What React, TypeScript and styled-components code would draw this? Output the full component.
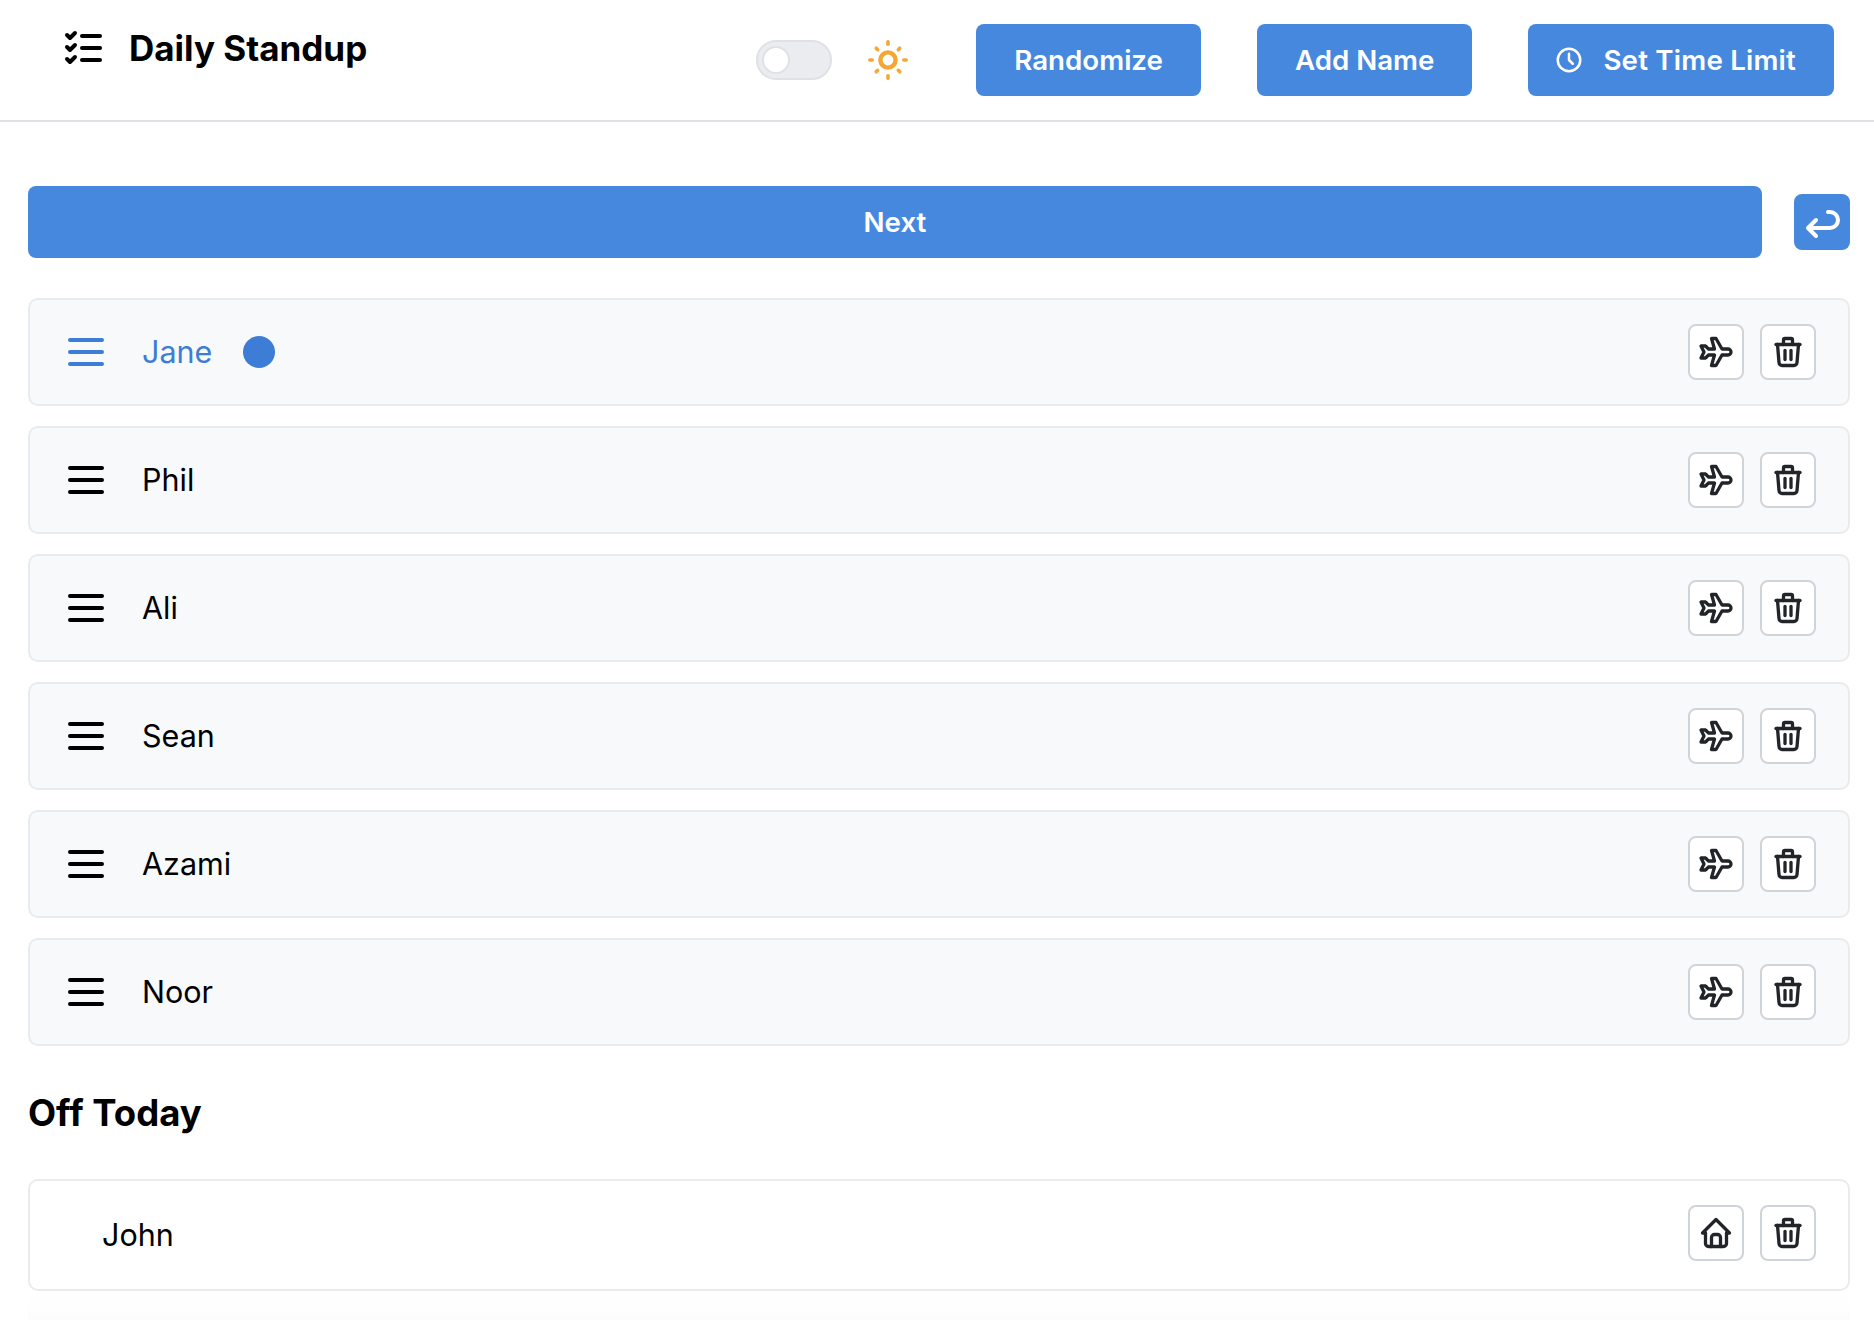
import styled, {createGlobalStyle} from 'styled-components';
import {
  TbArrowBack,
  TbClock,
  TbHome,
  TbListCheck,
  TbMenu2,
  TbPlane,
  TbTrash,
} from 'react-icons/tb';

const COLORS = {
  primary: '#4788df',
  active: '#3e7dd6',
  border: '#e9ecef',
  control: '#ced4da',
  rowBg: '#f8f9fa',
  icon: '#212529',
};

const NAMES = ['Jane', 'Phil', 'Ali', 'Sean', 'Azami', 'Noor'];

const GlobalStyle = createGlobalStyle`
  html, body {
    margin: 0;
    background: #fff;
    font-family: Inter, "Liberation Sans", sans-serif;
    color: #000;
  }
  * {
    box-sizing: border-box;
  }
`;

const Page = styled.div`
  height: 1320px;
  overflow: hidden;
  display: flex;
  flex-direction: column;
`;

const Header = styled.header`
  display: flex;
  justify-content: space-between;
  align-items: flex-start;
  height: 122px;
  padding: 24px 40px 0 60px;
  border-bottom: 2px solid #dee2e6;
`;

const Brand = styled.div`
  display: flex;
  align-items: center;
  gap: 21px;
  height: 48px;
`;

const Title = styled.h1`
  margin: 0;
  font-size: 35px;
  line-height: 48px;
  font-weight: 700;
`;

const Controls = styled.div`
  display: flex;
  align-items: center;
  gap: 56px;
`;

const ThemeSwitch = styled.div`
  display: flex;
  align-items: center;
  gap: 32px;
  padding-right: 8px;
  color: #f5a733;
`;

const SwitchTrack = styled.div`
  width: 76px;
  height: 40px;
  padding: 4px;
  border-radius: 20px;
  background: #eaecf0;
  border: 2px solid #dee2e6;
  display: flex;
  align-items: center;
`;

const SwitchThumb = styled.span`
  width: 28px;
  height: 28px;
  border-radius: 50%;
  background: #fff;
  border: 2px solid #dee2e6;
`;

const Button = styled.button<{$withIcon?: boolean}>`
  display: flex;
  align-items: center;
  justify-content: center;
  gap: 19px;
  height: 72px;
  padding: 0 38px 0 ${(p) => (p.$withIcon ? '26px' : '38px')};
  border: 0;
  border-radius: 8px;
  background: ${COLORS.primary};
  color: #fff;
  font-family: inherit;
  font-size: 27.7px;
  font-weight: 600;
  letter-spacing: ${(p) => (p.$withIcon ? '0.2px' : '0')};
`;

const Main = styled.main`
  flex: 1;
  padding: 64px 24px 0 28px;
  display: flex;
  flex-direction: column;
`;

const NextRow = styled.div`
  display: flex;
  align-items: center;
  gap: 32px;
  margin-bottom: 40px;
`;

const NextButton = styled(Button)`
  flex: 1;
`;

const ReturnButton = styled.button`
  width: 56px;
  height: 56px;
  padding: 0;
  border: 0;
  border-radius: 8px;
  background: ${COLORS.primary};
  color: #fff;
  display: flex;
  align-items: center;
  justify-content: center;
`;

const List = styled.div`
  display: flex;
  flex-direction: column;
  gap: 20px;
`;

const Row = styled.div<{$off?: boolean}>`
  display: flex;
  align-items: center;
  gap: 32px;
  height: ${(p) => (p.$off ? '112px' : '108px')};
  padding: 0 32px;
  border: 2px solid ${COLORS.border};
  border-radius: 10px;
  background: ${(p) => (p.$off ? '#fff' : COLORS.rowBg)};
`;

const Handle = styled.span<{$active?: boolean}>`
  display: flex;
  color: ${(p) => (p.$active ? COLORS.active : '#000')};
`;

const Name = styled.span<{$active?: boolean; $off?: boolean}>`
  font-size: 30.5px;
  color: ${(p) => (p.$active ? COLORS.active : '#000')};
  margin: 0 0 2px ${(p) => (p.$off ? '40px' : '0')};
`;

const Dot = styled.span`
  width: 32px;
  height: 32px;
  margin-left: -1px;
  border-radius: 50%;
  background: ${COLORS.active};
`;

const Actions = styled.div<{$off?: boolean}>`
  display: flex;
  gap: 16px;
  margin-left: auto;
  margin-bottom: ${(p) => (p.$off ? '4px' : '0')};
`;

const ActionButton = styled.button`
  width: 56px;
  height: 56px;
  padding: 0;
  border: 2px solid ${COLORS.control};
  border-radius: 8px;
  background: #fff;
  color: ${COLORS.icon};
  display: flex;
  align-items: center;
  justify-content: center;
`;

const SectionTitle = styled.h2`
  margin: 42px 0 41px;
  font-size: 36.5px;
  line-height: 50px;
  font-weight: 700;
`;

const BottomFade = styled.div`
  height: 26px;
  margin-top: auto;
  background: linear-gradient(#fff, #fcfcfc);
`;

// tabler sun-low has round dots, the reference rays are a bit longer
const SunIcon = () => (
  <svg
    width="48"
    height="48"
    viewBox="0 0 24 24"
    fill="none"
    stroke="currentColor"
    strokeWidth="2"
    strokeLinecap="round"
  >
    <circle cx="12" cy="12" r="3.8" strokeWidth="2.2" />
    {[0, 45, 90, 135, 180, 225, 270, 315].map((deg) => (
      <line
        key={deg}
        x1="12"
        y1={deg % 90 === 0 ? 2.9 : 3.7}
        x2="12"
        y2={deg % 90 === 0 ? 4.1 : 4.7}
        strokeWidth="1.8"
        transform={`rotate(${deg} 12 12)`}
      />
    ))}
  </svg>
);

const RowActions = ({off}: {off?: boolean}) => (
  <Actions $off={off}>
    <ActionButton>
      {off ? <TbHome size={36} strokeWidth={2.2} /> : <TbPlane size={36} strokeWidth={2.2} />}
    </ActionButton>
    <ActionButton>
      <TbTrash size={36} strokeWidth={2.2} />
    </ActionButton>
  </Actions>
);

export default function App() {
  return (
    <Page>
      <GlobalStyle />
      <Header>
        <Brand>
          <TbListCheck size={48} />
          <Title>Daily Standup</Title>
        </Brand>
        <Controls>
          <ThemeSwitch>
            <SwitchTrack>
              <SwitchThumb />
            </SwitchTrack>
            <SunIcon />
          </ThemeSwitch>
          <Button>Randomize</Button>
          <Button>Add Name</Button>
          <Button $withIcon>
            <TbClock size={30} />
            Set Time Limit
          </Button>
        </Controls>
      </Header>
      <Main>
        <NextRow>
          <NextButton>Next</NextButton>
          <ReturnButton>
            <TbArrowBack size={48} />
          </ReturnButton>
        </NextRow>
        <List>
          {NAMES.map((name, i) => (
            <Row key={name}>
              <Handle $active={i === 0}>
                <TbMenu2 size={48} />
              </Handle>
              <Name $active={i === 0}>{name}</Name>
              {i === 0 && <Dot />}
              <RowActions />
            </Row>
          ))}
        </List>
        <SectionTitle>Off Today</SectionTitle>
        <Row $off>
          <Name $off>John</Name>
          <RowActions off />
        </Row>
        <BottomFade />
      </Main>
    </Page>
  );
}
